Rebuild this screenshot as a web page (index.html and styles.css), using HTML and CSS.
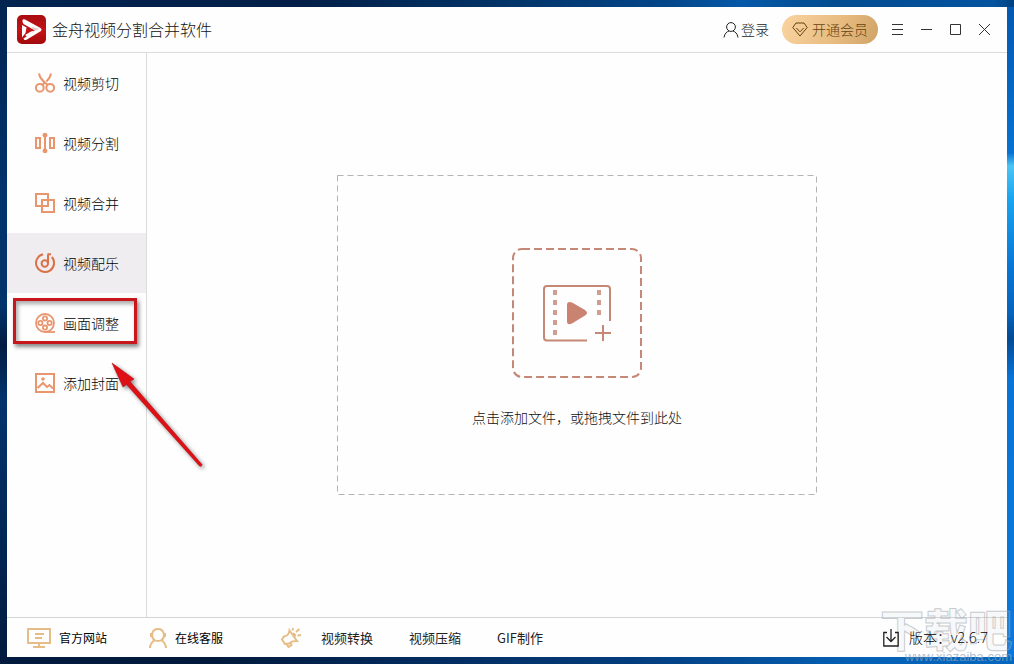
FILE: index.html
```html
<!DOCTYPE html>
<html lang="zh-CN">
<head>
<meta charset="utf-8">
<title>金舟视频分割合并软件</title>
<link rel="stylesheet" href="styles.css">
</head>
<body>
<div class="window">
  <header class="titlebar">
    <svg class="logo" viewBox="0 0 29 29" aria-hidden="true">
      <defs><linearGradient id="lg" x1="0" y1="0" x2="0" y2="1"><stop offset="0" stop-color="#a80d10"/><stop offset=".55" stop-color="#c51217"/><stop offset="1" stop-color="#a00a0c"/></linearGradient></defs>
      <rect width="29" height="29" rx="5" fill="url(#lg)"/>
      <path d="M5.500 5Q6 4 8 4.500L23.500 13Q25.500 14.500 24 16L10 24.500Q7 26 6.500 23.500L18 15.500L6.500 9Q5 7.500 5.500 5Z" fill="#fff"/>
      <path d="M5 10L9.500 12.500L8.500 18L5 22.500Z" fill="#fff"/>
      <path d="M8 20L14 16.500L18 15.500L10 21.500Z" fill="#fff"/>
      <path d="M14 13L18 15.500L22.500 14L16 12Z" fill="#e3cccc"/>
    </svg>
    <h1 class="title">金舟视频分割合并软件</h1>
    <button class="login" type="button">
      <svg class="user" viewBox="0 0 16 16"><circle cx="8" cy="5" r="4.400"/><path d="M1 15.500C1.500 11.500 4 9.500 6 9M15 15.500C14.500 11.500 12 9.500 10 9"/></svg>
      <span>登录</span>
    </button>
    <button class="vip" type="button">
      <svg class="gem" viewBox="0 0 16 15"><path d="M4 1H12L15.200 5.500L8 14L.8 5.500Z"/><path d="M4.300 6L8 9.800L11.700 6"/></svg>
      <span>开通会员</span>
    </button>
    <div class="controls">
      <button type="button" aria-label="菜单"><svg viewBox="0 0 13 13"><path d="M1 1.500H12M1 6.500H12M1 11.500H12"/></svg></button>
      <button type="button" aria-label="最小化"><svg viewBox="0 0 13 13"><path d="M1 6.500H12"/></svg></button>
      <button type="button" aria-label="最大化"><svg viewBox="0 0 13 13"><path d="M1.500 1.500H11.500V11.500H1.500Z"/></svg></button>
      <button type="button" aria-label="关闭"><svg viewBox="0 0 13 13"><path d="M1 1L12 12M12 1L1 12"/></svg></button>
    </div>
  </header>

  <div class="body">
    <nav class="sidebar">
      <button class="item" type="button">
        <svg viewBox="0 0 20 20"><circle cx="4.800" cy="14.800" r="3.900"/><circle cx="15.200" cy="14.800" r="3.900"/><path d="M4 .5C4.500 4 7 7.500 12.500 11.800M16 .5C15.500 4 14 6 11.500 8.500M9.500 9.800L7.500 11.800"/></svg>
        <span>视频剪切</span>
      </button>
      <button class="item" type="button">
        <svg viewBox="0 0 20 20"><path d="M1 5H5V15H1ZM15 5H19V15H15ZM10 2V18"/><circle class="fill" cx="10" cy="2.200" r="2.400"/><circle class="fill" cx="10" cy="17.800" r="2.400"/></svg>
        <span>视频分割</span>
      </button>
      <button class="item" type="button">
        <svg viewBox="0 0 20 20"><path d="M1 1H13V13H1ZM7 7H19V19H7Z"/></svg>
        <span>视频合并</span>
      </button>
      <button class="item active" type="button">
        <svg viewBox="0 0 20 20"><path d="M8 1.200A9 9 0 1 0 16.800 4"/><circle cx="9.800" cy="10.500" r="3.200"/><path d="M13 10.500V1.500M12.500 1.200L16 1.200"/></svg>
        <span>视频配乐</span>
      </button>
      <button class="item marked" type="button">
        <svg class="reel" viewBox="0 0 20 20"><circle cx="10" cy="10" r="9"/><circle cx="10" cy="5.400" r="2.100"/><circle cx="10" cy="14.600" r="2.100"/><circle cx="5.400" cy="10" r="2.100"/><circle cx="14.600" cy="10" r="2.100"/><path d="M10 19H20"/></svg>
        <span>画面调整</span>
      </button>
      <button class="item" type="button">
        <svg viewBox="0 0 20 20"><path d="M1 1H19V19H1Z"/><path d="M2.500 15L8 10L12 14L14.500 12L18 15.500"/><circle class="fill" cx="8" cy="6" r="1.800"/></svg>
        <span>添加封面</span>
      </button>
      <svg class="arrow" viewBox="0 0 100 112" aria-hidden="true"><path d="M3 3L25 19L21 21.500L93 104.500Q93 107 90.500 106L17.500 24.500L14 27Z"/></svg>
    </nav>
    <main class="stage">
      <button class="dropzone" type="button">
        <svg class="zone-frame" aria-hidden="true"><rect x="0.500" y="0.500"/></svg>
        <svg class="add" viewBox="0 0 130 130">
          <rect class="dash" x="1" y="1" width="128" height="128" rx="9"/>
          <path class="line" d="M75 92.500H35Q32 92.500 32 89.500V41Q32 38 35 38H95Q98 38 98 41V73"/>
          <path class="line" d="M91 77V93M83 85H99"/>
          <path class="solid" d="M55 57Q55 52.500 60 54.500L73 62Q77 65 73 67.500L60 75.500Q55 78 55 73Z"/>
          <path class="holes" d="M43 42V90M87 42V70"/>
        </svg>
        <span>点击添加文件，或拖拽文件到此处</span>
      </button>
    </main>
  </div>

  <footer class="footer">
    <a class="link site" href="#"><svg viewBox="0 0 24 20"><path d="M1 1H23V15H1ZM12 15V19M6 19H18M8 6H17M8 10H15"/></svg><span>官方网站</span></a>
    <a class="link service" href="#"><svg viewBox="0 0 18 20"><path d="M5.500 12C1.500 9 2.500 1 9 1S16.500 9 12.500 12Q9 14 5.500 12M1 20C1 16 3 14 5.500 12M17 20C17 16 15 14 12.500 12M2 5V9M16 5V9"/></svg><span>在线客服</span></a>
    <svg class="horn" viewBox="0 0 20 20"><path d="M8.500 2.500L16 13Q11 12.500 8 15.500L4 16L1 11.500L3 8.500Q8 7.500 8.500 2.500ZM5.500 16L7.500 19L10.500 17L9.500 14.500M12 5.500Q14.500 6 14 8.500M11.500 2.500L12 0M15 4L18.500 1M16.500 7.500L20 7"/></svg>
    <div class="promos">
      <a href="#">视频转换</a>
      <a href="#">视频压缩</a>
      <a href="#">GIF制作</a>
    </div>
    <div class="version"><svg viewBox="0 0 16 18"><path d="M4 3.500H.8V17H15.200V3.500H12M8 0V12.500M3.500 8L8 12.500L12.500 8"/></svg><span>版本：v2.6.7</span></div>
  </footer>
</div>
<div class="watermark" aria-hidden="true"><span class="mark-name">下载吧</span><span class="mark-url">www.xiazaiba.com</span></div>
</body>
</html>
```
FILE: styles.css
```css
*, *::after { box-sizing: border-box; }

body {
  margin: 0;
  min-height: 100vh;
  padding: 7px;
  display: flex;
  position: relative;
  overflow: hidden;
  font-family: "Noto Sans CJK SC", sans-serif;
  font-size: 14px;
  line-height: 20px;
  font-weight: 300;
  color: #000;
  background:
    linear-gradient(90deg, #022450, #011f48 30%, #023468 50%, #04468a 66%, #0558a8 73%, #034c90 82%, #0353a0 98%, #024080) top / 100% 7px no-repeat,
    linear-gradient(90deg, #021a3e, #01193a 20%, #022858 38%, #033c7c 62%, #0560b4 84%, #0568c0) bottom / 100% 7px no-repeat,
    linear-gradient(#0458b0, #0672d2 23%, #4cc4f4 25%, #18a4f0 30%, #0877d6 40%, #0664bd 47%, #044a94 51%, #0874d8 57%, #0a78dc) right / 7px 100% no-repeat,
    linear-gradient(#022450, #02346c 30%, #02346c 46%, #011c42 52%, #02346c 60%, #022450 85%, #021a3e) left / 7px 100% no-repeat,
    #02346c;
}

button { font: inherit; color: inherit; border: 0; background: none; padding: 0; }
a { color: inherit; text-decoration: none; }
svg { display: block; flex: none; fill: none; stroke: currentColor; }

.window { flex: 1; min-width: 0; display: flex; flex-direction: column; background: #fefefe; }

.titlebar { height: 46px; display: flex; align-items: center; padding: 0 16px 0 10px; border-bottom: 1px solid #dcdcdc; }
.logo { width: 29px; height: 29px; stroke: none; }
.title { flex: 1; margin: 0 0 2px 6px; font-size: 16px; line-height: 24px; font-weight: 300; color: #111; }
.login { display: flex; align-items: center; gap: 2px; color: #222; }
.login span, .vip span { padding-bottom: 2px; }
.user { width: 16px; height: 16px; }
.vip { display: flex; align-items: center; gap: 4px; height: 29px; margin-left: 13px; padding: 0 10px; border-radius: 15px; color: #65420f; background: linear-gradient(110deg, #f9d3a0, #e7bb80 60%, #cfa366); }
.gem { width: 16px; height: 15px; }
.controls { display: flex; gap: 16px; margin-left: 13px; color: #333; }
.controls svg { width: 13px; height: 13px; }

.body { flex: 1; display: flex; }
.sidebar { position: relative; width: 140px; border-right: 1px solid #dcdcdc; }
.item { position: relative; display: flex; align-items: center; gap: 8px; width: 100%; height: 60px; padding-left: 28px; }
.item svg { width: 20px; height: 20px; color: #e9966f; stroke-width: 2; }
.item .fill { fill: currentColor; stroke: none; }
.item .reel { stroke-width: 1.8; }
.item.active { background: #efedf0; }
.item.active svg { color: #dc7148; }
.marked::after { content: ""; position: absolute; left: 6px; top: 5px; width: 124px; height: 46px; border: 3px solid #c8161d; box-shadow: 2px 3px 4px #0007, inset 2px 3px 4px #0005; }
.arrow { position: absolute; left: 102px; top: 307px; width: 100px; height: 112px; fill: #df1015; stroke: #b31217; stroke-width: 0.6; filter: drop-shadow(2px 2px 2px #0007); z-index: 1; pointer-events: none; }

.stage { flex: 1; display: flex; align-items: center; justify-content: center; }
.dropzone { position: relative; width: 480px; height: 320px; display: flex; flex-direction: column; align-items: center; justify-content: center; gap: 29px; padding-top: 5px; color: #111; }
.zone-frame { position: absolute; inset: 0; width: 100%; height: 100%; }
.zone-frame rect { width: calc(100% - 1px); height: calc(100% - 1px); stroke: #b4b4b4; stroke-dasharray: 6 4; }
.add { width: 130px; height: 130px; color: #c58877; stroke-width: 2; }
.add .dash { stroke-dasharray: 8 4; }
.add .solid { fill: #ca8370; stroke: none; }
.add .holes { stroke: #cf9e90; stroke-width: 4; stroke-dasharray: 5 5; }

.footer { height: 40px; display: flex; align-items: center; padding: 0 19px 0 20px; border-top: 1px solid #d4d4d4; font-size: 12px; font-weight: 400; }
.link { display: flex; align-items: center; gap: 8px; }
.footer svg { height: 20px; color: #e6bd86; stroke-width: 2; }
.site svg { width: 24px; }
.service { margin-left: 42px; }
.service svg { width: 18px; }
.footer .horn { width: 20px; margin-left: 58px; }
.promos { display: flex; gap: 36px; margin-left: 20px; font-size: 13px; color: #222; }
.version { position: relative; z-index: 1; display: flex; align-items: center; gap: 10px; margin-left: auto; font-family: "Open Sans", "Noto Sans CJK SC", sans-serif; font-size: 14px; font-weight: 300; color: #000; }
.footer .version svg { width: 16px; height: 18px; color: #222; stroke-width: 1.3; }

.watermark { position: absolute; right: 2px; bottom: 0; display: flex; flex-direction: column; align-items: flex-end; pointer-events: none; }
.mark-name { font-size: 44px; line-height: 44px; font-weight: 900; color: #c8d0d820; -webkit-text-stroke: 1px #a0a6ac90; }
.mark-url { font-family: "Liberation Sans", sans-serif; font-size: 13px; line-height: 14px; font-weight: 400; color: #8fa5bdb0; }
```
